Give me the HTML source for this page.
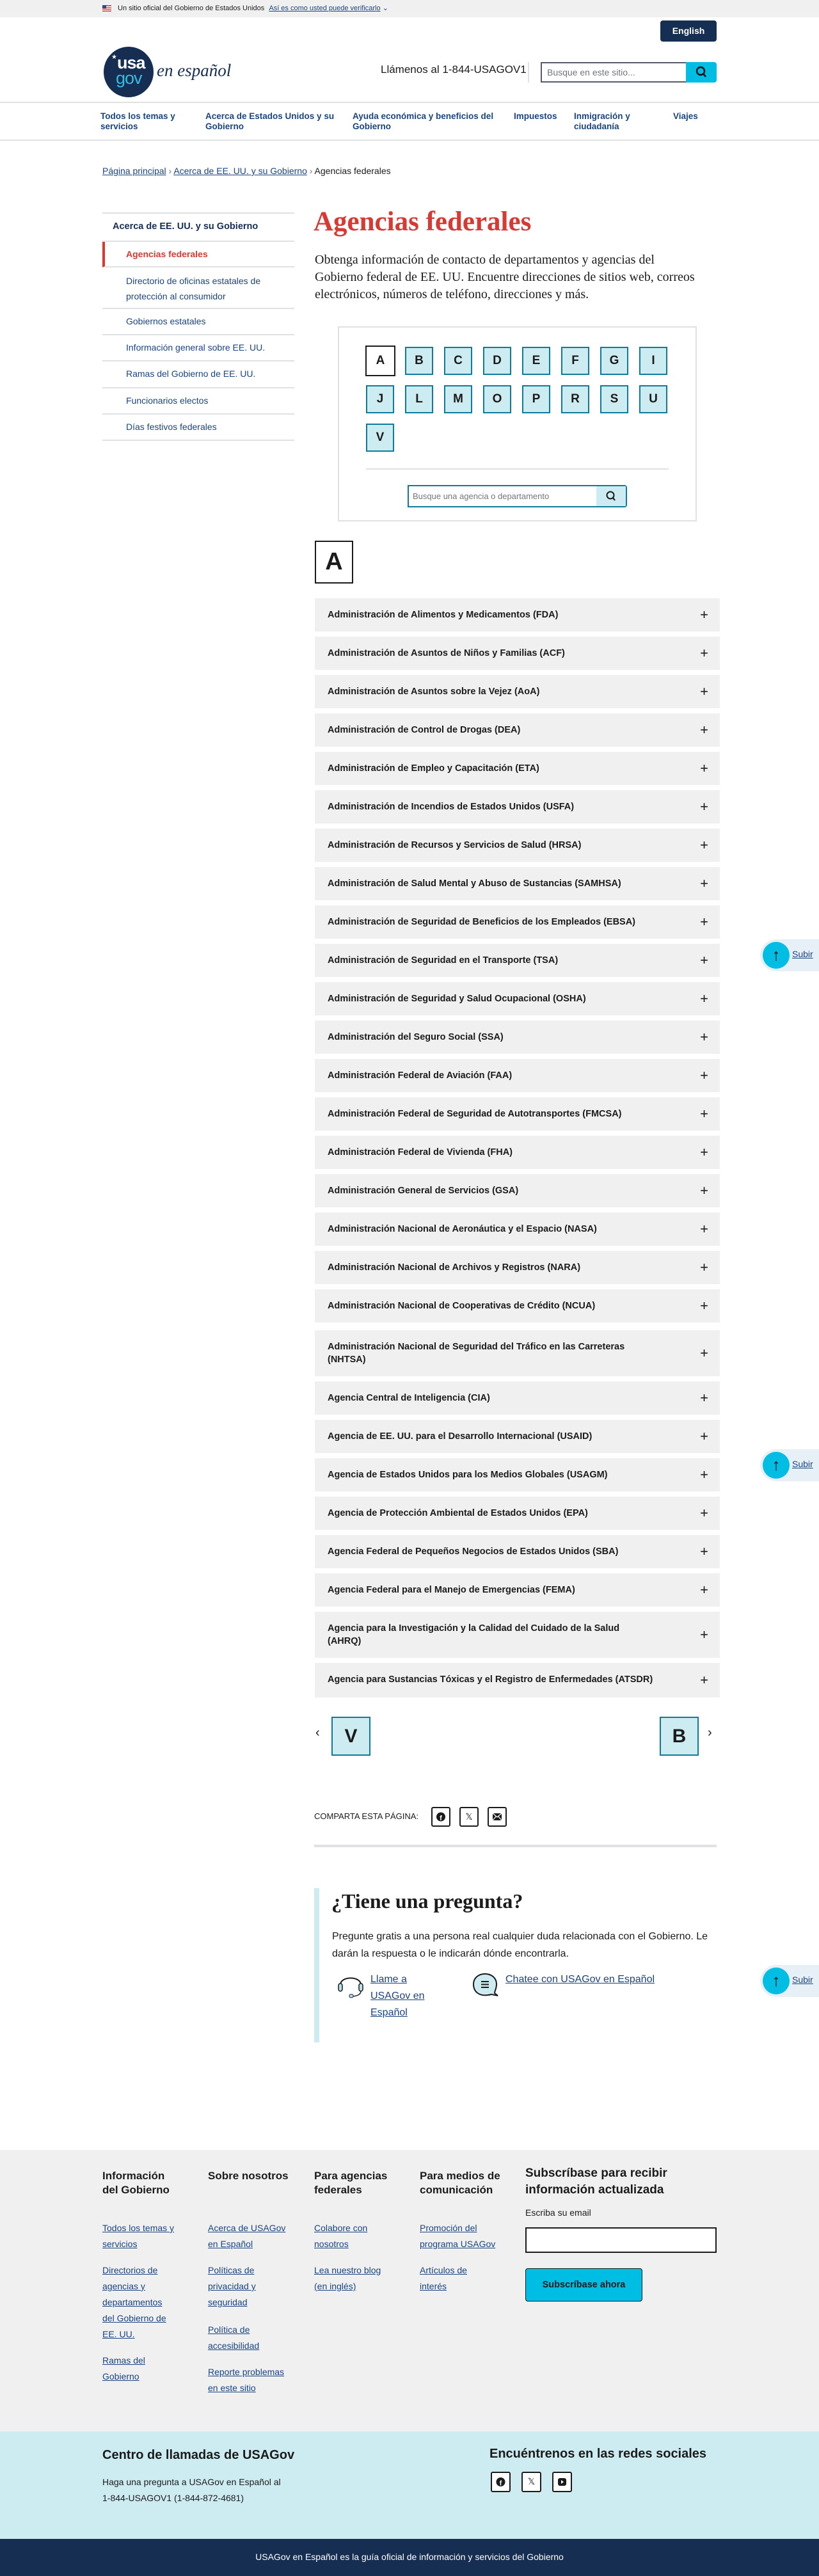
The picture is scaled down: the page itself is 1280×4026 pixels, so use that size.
<!DOCTYPE html>
<html><head><meta charset="utf-8">
<style>
*{box-sizing:border-box;margin:0;padding:0}
body{width:1280px;height:4026px;position:relative;font-family:"Liberation Sans",sans-serif;color:#1b1b1b;background:#fff;overflow:hidden}
.a{position:absolute}
a{color:#1a4480}
.lnk{color:#1a4480;text-decoration:underline}
.banner{left:0;top:0;width:1280px;height:27px;background:#f0f0f0;font-size:11px}
.nav a{position:absolute;font-size:13.5px;font-weight:bold;color:#1a4480;text-decoration:none;line-height:16px;top:174px}
.side{left:160px;width:300px}
.side div{position:absolute;left:0;width:300px;border-bottom:2px solid #dfe1e2;font-size:14px;color:#1a4480;padding-left:37px}
.lt{position:absolute;width:44px;height:44px;background:#ccecf2;border:2px solid #0f7a99;font-weight:bold;font-size:19px;text-align:center;line-height:40px;color:#1b1b1b}
.acc{position:absolute;left:492px;width:633px;background:#f0f0f0;font-weight:bold;font-size:14.5px;padding:16px 60px 16px 20px;line-height:20px}
.acc:after{content:"+";position:absolute;right:18px;top:50%;transform:translateY(-50%);font-size:22px;font-weight:normal}
.fh{position:absolute;font-weight:bold;font-size:17px;line-height:22px;top:3390px;width:150px}
.fl{position:absolute;font-size:14px;line-height:25px;color:#1a4480;text-decoration:underline;width:140px}
.sub{position:absolute;left:1188px;width:92px;height:50px;background:#e8f0f7;border-radius:25px 0 0 25px}
.sub i{position:absolute;left:4px;top:4px;width:42px;height:42px;border-radius:50%;background:#00bde3;font-style:normal;text-align:center;line-height:40px;font-size:26px;color:#111}
.sub span{position:absolute;left:50px;top:15px;font-size:14px;color:#1a4480;text-decoration:underline}
.soc{position:absolute;width:30px;height:31px;border:2px solid #1b1b1b;border-radius:3px;background:#fff;text-align:center;line-height:27px;font-size:14px;font-weight:bold}
</style></head><body>

<div class="a banner">
  <div class="a" style="left:160px;top:8px;width:14px;height:10px;background:repeating-linear-gradient(#c33 0 1.4px,#fff 1.4px 2.8px)"><div style="width:6px;height:5px;background:#2a4a8a"></div></div>
  <div class="a" style="left:184px;top:6px">Un sitio oficial del Gobierno de Estados Unidos <span class="lnk" style="margin-left:4px">Así es como usted puede verificarlo</span> <span style="color:#1a4480">⌄</span></div>
</div>

<div class="a" style="left:1032px;top:32px;width:88px;height:33px;background:#162e51;border-radius:4px;color:#fff;font-weight:bold;font-size:14px;text-align:center;line-height:33px">English</div>

<div class="a" style="left:162px;top:73px;width:78px;height:79px;border-radius:50%;background:#162e51"></div>
<div class="a" style="left:183px;top:86px;color:#fff;font-weight:bold;font-size:27px;line-height:24px;letter-spacing:-1px">usa</div>
<div class="a" style="left:181px;top:110px;color:#34bde3;font-size:27px;line-height:24px;letter-spacing:-1px">gov</div>
<div class="a" style="left:174px;top:84px;color:#fff;font-size:10px">★</div>
<div class="a" style="left:245px;top:95px;color:#162e51;font-family:'Liberation Serif',serif;font-style:italic;font-size:27px">en español</div>

<div class="a" style="left:595px;top:99px;font-size:17px">Llámenos al 1-844-USAGOV1</div>
<div class="a" style="left:825px;top:97px;width:2px;height:32px;background:#dfe1e2"></div>
<div class="a" style="left:845px;top:97px;width:229px;height:32px;border:2px solid #565c65;border-right:none;font-size:14px;color:#71767a;padding:6px 8px">Busque en este sitio...</div>
<div class="a" style="left:1072px;top:97px;width:48px;height:32px;background:#00bde3;border-radius:0 4px 4px 0">
<svg width="48" height="32"><circle cx="23" cy="14" r="6" stroke="#111" stroke-width="2.4" fill="none"/><line x1="27" y1="18" x2="31" y2="23" stroke="#111" stroke-width="2.6"/></svg></div>

<div class="a" style="left:0;top:159px;width:1280px;height:2px;background:#dfe1e2"></div>
<div class="nav">
<a style="left:157px">Todos los temas y<br>servicios</a>
<a style="left:321px">Acerca de Estados Unidos y su<br>Gobierno</a>
<a style="left:551px">Ayuda económica y beneficios del<br>Gobierno</a>
<a style="left:803px">Impuestos</a>
<a style="left:897px">Inmigración y<br>ciudadanía</a>
<a style="left:1052px">Viajes</a>
</div>
<div class="a" style="left:0;top:218px;width:1280px;height:2px;background:#dfe1e2"></div>

<div class="a" style="left:160px;top:259px;font-size:14px"><span class="lnk">Página principal</span> <span style="color:#71767a">›</span> <span class="lnk">Acerca de EE. UU. y su Gobierno</span> <span style="color:#71767a">›</span> Agencias federales</div>

<div class="a side" style="top:332px">
<div style="top:0;height:2px;border:none;background:#dfe1e2"></div>
<div style="top:2px;height:44px;padding:12px 16px;font-weight:bold;color:#162e51;font-size:14.5px">Acerca de EE. UU. y su Gobierno</div>
<div style="top:46px;height:40px;padding-top:11px;color:#d83933;font-weight:bold;border-left:4px solid #d83933;padding-left:33px;border-bottom-width:2px">Agencias federales</div>
<div style="top:86px;height:65px;padding-top:9px;line-height:24px">Directorio de oficinas estatales de<br>protección al consumidor</div>
<div style="top:151px;height:41px;padding-top:11px">Gobiernos estatales</div>
<div style="top:192px;height:41px;padding-top:11px">Información general sobre EE. UU.</div>
<div style="top:233px;height:42px;padding-top:11px">Ramas del Gobierno de EE. UU.</div>
<div style="top:275px;height:41px;padding-top:11px">Funcionarios electos</div>
<div style="top:316px;height:41px;padding-top:11px">Días festivos federales</div>
</div>

<div class="a" style="left:490px;top:322px;font-family:'Liberation Serif',serif;font-weight:bold;font-size:43px;color:#d83933">Agencias federales</div>
<div class="a" style="left:492px;top:393px;width:610px;font-family:'Liberation Serif',serif;font-size:20px;line-height:27px">Obtenga información de contacto de departamentos y agencias del Gobierno federal de EE. UU. Encuentre direcciones de sitios web, correos electrónicos, números de teléfono, direcciones y más.</div>

<div class="a" style="left:528px;top:510px;width:561px;height:305px;border:2px solid #dfe1e2"></div>
<div class="lt" style="left:571px;top:540px;width:47px;height:48px;background:#fff;border:2px solid #1b1b1b;line-height:44px">A</div>
<div class="lt" style="left:633px;top:542px">B</div>
<div class="lt" style="left:694px;top:542px">C</div>
<div class="lt" style="left:755px;top:542px">D</div>
<div class="lt" style="left:816px;top:542px">E</div>
<div class="lt" style="left:877px;top:542px">F</div>
<div class="lt" style="left:938px;top:542px">G</div>
<div class="lt" style="left:999px;top:542px">I</div>
<div class="lt" style="left:572px;top:602px">J</div>
<div class="lt" style="left:633px;top:602px">L</div>
<div class="lt" style="left:694px;top:602px">M</div>
<div class="lt" style="left:755px;top:602px">O</div>
<div class="lt" style="left:816px;top:602px">P</div>
<div class="lt" style="left:877px;top:602px">R</div>
<div class="lt" style="left:938px;top:602px">S</div>
<div class="lt" style="left:999px;top:602px">U</div>
<div class="lt" style="left:572px;top:662px">V</div>
<div class="a" style="left:572px;top:732px;width:473px;height:2px;background:#dfe1e2"></div>
<div class="a" style="left:637px;top:758px;width:343px;height:35px;border:2px solid #0f7a99;border-radius:0 4px 4px 0;font-size:13px;color:#71767a;padding:8px 6px">Busque una agencia o departamento</div>
<div class="a" style="left:932px;top:760px;width:46px;height:31px;background:#ccecf2"><svg width="46" height="31"><circle cx="22" cy="14" r="5.5" stroke="#1b1b1b" stroke-width="2" fill="none"/><line x1="26" y1="18" x2="29" y2="22" stroke="#1b1b1b" stroke-width="2.2"/></svg></div>

<div class="a" style="left:492px;top:845px;width:60px;height:67px;border:2px solid #1b1b1b;font-weight:bold;font-size:38px;text-align:center;line-height:62px">A</div>

<div class="acc" style="top:935px">Administración de Alimentos y Medicamentos (FDA)</div>
<div class="acc" style="top:995px">Administración de Asuntos de Niños y Familias (ACF)</div>
<div class="acc" style="top:1055px">Administración de Asuntos sobre la Vejez (AoA)</div>
<div class="acc" style="top:1115px">Administración de Control de Drogas (DEA)</div>
<div class="acc" style="top:1175px">Administración de Empleo y Capacitación (ETA)</div>
<div class="acc" style="top:1235px">Administración de Incendios de Estados Unidos (USFA)</div>
<div class="acc" style="top:1295px">Administración de Recursos y Servicios de Salud (HRSA)</div>
<div class="acc" style="top:1355px">Administración de Salud Mental y Abuso de Sustancias (SAMHSA)</div>
<div class="acc" style="top:1415px">Administración de Seguridad de Beneficios de los Empleados (EBSA)</div>
<div class="acc" style="top:1475px">Administración de Seguridad en el Transporte (TSA)</div>
<div class="acc" style="top:1535px">Administración de Seguridad y Salud Ocupacional (OSHA)</div>
<div class="acc" style="top:1595px">Administración del Seguro Social (SSA)</div>
<div class="acc" style="top:1655px">Administración Federal de Aviación (FAA)</div>
<div class="acc" style="top:1715px">Administración Federal de Seguridad de Autotransportes (FMCSA)</div>
<div class="acc" style="top:1775px">Administración Federal de Vivienda (FHA)</div>
<div class="acc" style="top:1835px">Administración General de Servicios (GSA)</div>
<div class="acc" style="top:1895px">Administración Nacional de Aeronáutica y el Espacio (NASA)</div>
<div class="acc" style="top:1955px">Administración Nacional de Archivos y Registros (NARA)</div>
<div class="acc" style="top:2015px">Administración Nacional de Cooperativas de Crédito (NCUA)</div>
<div class="acc" style="top:2079px;height:72px">Administración Nacional de Seguridad del Tráfico en las Carreteras<br>(NHTSA)</div>
<div class="acc" style="top:2159px">Agencia Central de Inteligencia (CIA)</div>
<div class="acc" style="top:2219px">Agencia de EE. UU. para el Desarrollo Internacional (USAID)</div>
<div class="acc" style="top:2279px">Agencia de Estados Unidos para los Medios Globales (USAGM)</div>
<div class="acc" style="top:2339px">Agencia de Protección Ambiental de Estados Unidos (EPA)</div>
<div class="acc" style="top:2399px">Agencia Federal de Pequeños Negocios de Estados Unidos (SBA)</div>
<div class="acc" style="top:2459px">Agencia Federal para el Manejo de Emergencias (FEMA)</div>
<div class="acc" style="top:2519px;height:72px">Agencia para la Investigación y la Calidad del Cuidado de la Salud<br>(AHRQ)</div>
<div class="acc" style="top:2599px;height:54px">Agencia para Sustancias Tóxicas y el Registro de Enfermedades (ATSDR)</div>

<div class="a" style="left:493px;top:2697px;font-size:20px">‹</div>
<div class="lt" style="left:518px;top:2683px;width:61px;height:61px;font-size:30px;line-height:57px">V</div>
<div class="lt" style="left:1031px;top:2683px;width:61px;height:61px;font-size:30px;line-height:57px">B</div>
<div class="a" style="left:1106px;top:2697px;font-size:20px">›</div>

<div class="a" style="left:491px;top:2831px;font-size:13px">COMPARTA ESTA PÁGINA:</div>
<div class="soc" style="left:674px;top:2824px"><svg width="26" height="27"><circle cx="13" cy="13.5" r="7" fill="#1b1b1b"/><text x="13" y="19" font-size="11" font-weight="bold" fill="#fff" text-anchor="middle" font-family="Liberation Sans">f</text></svg></div>
<div class="soc" style="left:718px;top:2824px;font-weight:normal">𝕏</div>
<div class="soc" style="left:762px;top:2824px"><svg width="26" height="27"><rect x="6" y="8" width="14" height="11" fill="#1b1b1b"/><path d="M6 8 L13 14 L20 8 M6 19 L11 13 M20 19 L15 13" stroke="#fff" stroke-width="1.2" fill="none"/></svg></div>
<div class="a" style="left:491px;top:2883px;width:629px;height:4px;background:#dfe1e2"></div>

<div class="a" style="left:491px;top:2951px;width:8px;height:241px;background:#ccecf2"></div>
<div class="a" style="left:518px;top:2953px;font-family:'Liberation Serif',serif;font-weight:bold;font-size:32px">¿Tiene una pregunta?</div>
<div class="a" style="left:519px;top:3013px;width:610px;font-size:16px;line-height:27px">Pregunte gratis a una persona real cualquier duda relacionada con el Gobierno. Le darán la respuesta o le indicarán dónde encontrarla.</div>
<svg class="a" style="left:526px;top:3080px" width="46" height="44"><path d="M6 22 C6 8 38 8 38 22" stroke="#1b1b1b" stroke-width="2" fill="none"/><rect x="3" y="20" width="6" height="12" rx="3" fill="#b9dfe8" stroke="#1b1b1b" stroke-width="1.5"/><rect x="35" y="20" width="6" height="12" rx="3" fill="#b9dfe8" stroke="#1b1b1b" stroke-width="1.5"/><path d="M38 32 C38 38 30 40 24 40" stroke="#1b1b1b" stroke-width="1.5" fill="none"/><rect x="20" y="37" width="6" height="5" rx="2" fill="#b9dfe8" stroke="#1b1b1b"/></svg>
<div class="a lnk" style="left:579px;top:3081px;font-size:16px;line-height:26px">Llame a<br>USAGov en<br>Español</div>
<svg class="a" style="left:738px;top:3082px" width="44" height="40"><path d="M20 3 C31 3 38 10 38 19 C38 26 35 30 35 33 L40 37 L30 35 C10 40 2 30 2 19 C2 10 9 3 20 3Z" fill="#ccecf2" stroke="#1b1b1b" stroke-width="2"/><path d="M14 15 H26 M14 19.5 H26 M14 24 H26" stroke="#1b1b1b" stroke-width="2"/></svg>
<div class="a lnk" style="left:790px;top:3081px;font-size:16px;line-height:26px">Chatee con USAGov en Español</div>

<div class="sub" style="top:1468px"><i>↑</i><span>Subir</span></div>
<div class="sub" style="top:2265px"><i>↑</i><span>Subir</span></div>
<div class="sub" style="top:3071px"><i>↑</i><span>Subir</span></div>
<div class="sub" style="top:3870px"><i>↑</i><span>Subir</span></div>

<div class="a" style="left:0;top:3360px;width:1280px;height:440px;background:#f0f0f0"></div>
<div class="fh" style="left:160px">Información<br>del Gobierno</div>
<div class="fh" style="left:325px">Sobre nosotros</div>
<div class="fh" style="left:491px">Para agencias<br>federales</div>
<div class="fh" style="left:656px">Para medios de<br>comunicación</div>
<div class="fh" style="left:821px;top:3384px;width:300px;font-size:19px;line-height:26px">Subscríbase para recibir<br>información actualizada</div>
<div class="fl" style="left:160px;top:3470px">Todos los temas y servicios</div>
<div class="fl" style="left:160px;top:3536px;width:110px">Directorios de agencias y departamentos del Gobierno de EE. UU.</div>
<div class="fl" style="left:160px;top:3677px;width:110px">Ramas del Gobierno</div>
<div class="fl" style="left:325px;top:3470px;width:135px">Acerca de USAGov en Español</div>
<div class="fl" style="left:325px;top:3536px;width:100px">Políticas de privacidad y seguridad</div>
<div class="fl" style="left:325px;top:3629px;width:100px">Política de accesibilidad</div>
<div class="fl" style="left:325px;top:3695px;width:135px">Reporte problemas en este sitio</div>
<div class="fl" style="left:491px;top:3470px;width:110px">Colabore con nosotros</div>
<div class="fl" style="left:491px;top:3536px;width:125px">Lea nuestro blog (en inglés)</div>
<div class="fl" style="left:656px;top:3470px;width:140px">Promoción del programa USAGov</div>
<div class="fl" style="left:656px;top:3536px;width:110px">Artículos de interés</div>
<div class="a" style="left:821px;top:3450px;font-size:14px">Escriba su email</div>
<div class="a" style="left:821px;top:3481px;width:299px;height:40px;background:#fff;border:2px solid #1b1b1b"></div>
<div class="a" style="left:821px;top:3545px;width:183px;height:52px;background:#00bde3;border:1px solid #1b1b1b;border-radius:4px;font-weight:bold;font-size:14.5px;text-align:center;line-height:50px">Subscríbase ahora</div>

<div class="a" style="left:0;top:3800px;width:1280px;height:168px;background:#ccecf2"></div>
<div class="a" style="left:160px;top:3826px;font-weight:bold;font-size:20px">Centro de llamadas de USAGov</div>
<div class="a" style="left:160px;top:3867px;font-size:14px;line-height:25px">Haga una pregunta a USAGov en Español al<br>1-844-USAGOV1 (1-844-872-4681)</div>
<div class="a" style="left:765px;top:3824px;font-weight:bold;font-size:20px">Encuéntrenos en las redes sociales</div>
<div class="soc" style="left:767px;top:3863px;width:31px;height:32px"><svg width="27" height="28"><circle cx="13.5" cy="14" r="7" fill="#1b1b1b"/><text x="13.5" y="19.5" font-size="11" font-weight="bold" fill="#fff" text-anchor="middle" font-family="Liberation Sans">f</text></svg></div>
<div class="soc" style="left:815px;top:3863px;width:31px;height:32px;font-weight:normal">𝕏</div>
<div class="soc" style="left:863px;top:3863px;width:31px;height:32px"><svg width="27" height="28"><rect x="7" y="8" width="13" height="12" rx="3" fill="#1b1b1b"/><path d="M12 11 L16 14 L12 17Z" fill="#fff"/></svg></div>

<div class="a" style="left:0;top:3968px;width:1280px;height:58px;background:#162e51;color:#fff;font-size:14px;text-align:center;line-height:56px">USAGov en Español es la guía oficial de información y servicios del Gobierno</div>
</body></html>
